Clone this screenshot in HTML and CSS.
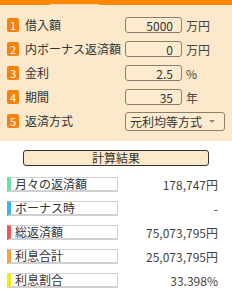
FILE: index.html
```html
<!DOCTYPE html>
<html lang="ja">
<head>
    <meta charset="UTF-8">
    <meta name="viewport" content="width=device-width, initial-scale=1.0">
    <title>ローン計算</title>
    <link rel="stylesheet" href="styles.css">
</head>
<body>
    <div class="topbar"><span class="tab"></span></div>

    <div class="form">
        <div class="row">
            <span class="badge">1</span>
            <span class="label">借入額</span>
            <input class="field" type="text" value="5000">
            <span class="unit">万円</span>
        </div>
        <div class="row">
            <span class="badge">2</span>
            <span class="label">内ボーナス返済額</span>
            <input class="field" type="text" value="0">
            <span class="unit">万円</span>
        </div>
        <div class="row">
            <span class="badge">3</span>
            <span class="label">金利</span>
            <input class="field" type="text" value="2.5">
            <span class="unit">%</span>
        </div>
        <div class="row">
            <span class="badge">4</span>
            <span class="label">期間</span>
            <input class="field" type="text" value="35">
            <span class="unit">年</span>
        </div>
        <div class="row">
            <span class="badge">5</span>
            <span class="label">返済方式</span>
            <div class="select-wrap">
                <select class="method">
                    <option>元利均等方式</option>
                    <option>元金均等方式</option>
                </select>
            </div>
        </div>
    </div>

    <div class="results">
        <button class="calc">計算結果</button>

        <div class="result">
            <span class="name green">月々の返済額</span>
            <span class="value">178,747円</span>
        </div>
        <div class="result">
            <span class="name blue">ボーナス時</span>
            <span class="value">-</span>
        </div>
        <div class="result">
            <span class="name red">総返済額</span>
            <span class="value">75,073,795円</span>
        </div>
        <div class="result">
            <span class="name orange">利息合計</span>
            <span class="value">25,073,795円</span>
        </div>
        <div class="result">
            <span class="name yellow">利息割合</span>
            <span class="value">33.398%</span>
        </div>
    </div>
</body>
</html>
```

FILE: styles.css
```css
body {
    font-family: "Noto Sans CJK JP", "Noto Sans", sans-serif;
    font-size: 12px;
    color: #333;
    background: #ffffff;
    margin: 0;
}

.topbar {
    height: 5px;
    background: #ff8800;
    display: flex;
    align-items: flex-end;
    padding-left: 50px;
}

.tab {
    width: 49px;
    height: 1px;
    background: #fbd9a8;
}

.form {
    background: #fce9cb;
    padding: 8px 0 8px;
}

.row {
    display: flex;
    align-items: center;
    height: 24px;
}

.badge {
    width: 12px;
    height: 14px;
    margin-left: 7px;
    background: #f5820f;
    color: #fff;
    border-radius: 2px;
    font-size: 11px;
    line-height: 14px;
    text-align: center;
}

.label {
    width: 100px;
    margin-left: 6px;
    line-height: 16px;
    white-space: nowrap;
}

.field {
    box-sizing: border-box;
    width: 57px;
    height: 16px;
    padding: 0 8px 0 0;
    border: 1px solid #8a8070;
    border-radius: 3px;
    background: #fdeccf;
    font-family: inherit;
    font-size: 12px;
    color: #333;
    text-align: right;
}

.unit {
    margin-left: 4px;
    color: #444;
}

.select-wrap {
    position: relative;
}

.select-wrap::after {
    content: "";
    position: absolute;
    right: 10px;
    top: 8px;
    border-left: 3px solid transparent;
    border-right: 3px solid transparent;
    border-top: 3px solid #888;
}

.method {
    box-sizing: border-box;
    width: 100px;
    height: 19px;
    padding: 0 0 0 4px;
    border: 1px solid #8a8070;
    border-radius: 3px;
    background: #fdeccf;
    font-family: inherit;
    font-size: 12px;
    color: #333;
    appearance: none;
    -webkit-appearance: none;
}

.results {
    display: flex;
    flex-direction: column;
    padding-top: 9px;
}

.calc {
    box-sizing: border-box;
    width: 186px;
    height: 16px;
    margin-left: 23px;
    margin-bottom: 6px;
    padding: 0;
    border: 1px solid #333;
    border-radius: 3px;
    background: #fde9c8;
    font-family: inherit;
    font-size: 12px;
    line-height: 14px;
    color: #333;
}

.result {
    display: flex;
    align-items: center;
    justify-content: space-between;
    height: 24px;
}

.name {
    box-sizing: border-box;
    width: 111px;
    height: 15px;
    margin-left: 7px;
    padding-left: 4px;
    border: 1px solid #d0d0d0;
    border-bottom: 2px solid #d0d0d0;
    border-left-width: 4px;
    line-height: 12px;
    background: #fff;
}

.name.green { border-left-color: #6be0a4; }
.name.blue { border-left-color: #3bb5ef; }
.name.red { border-left-color: #f25454; }
.name.orange { border-left-color: #f9a040; }
.name.yellow { border-left-color: #f2ee00; }

.value {
    margin-right: 14px;
    color: #444;
}
```
